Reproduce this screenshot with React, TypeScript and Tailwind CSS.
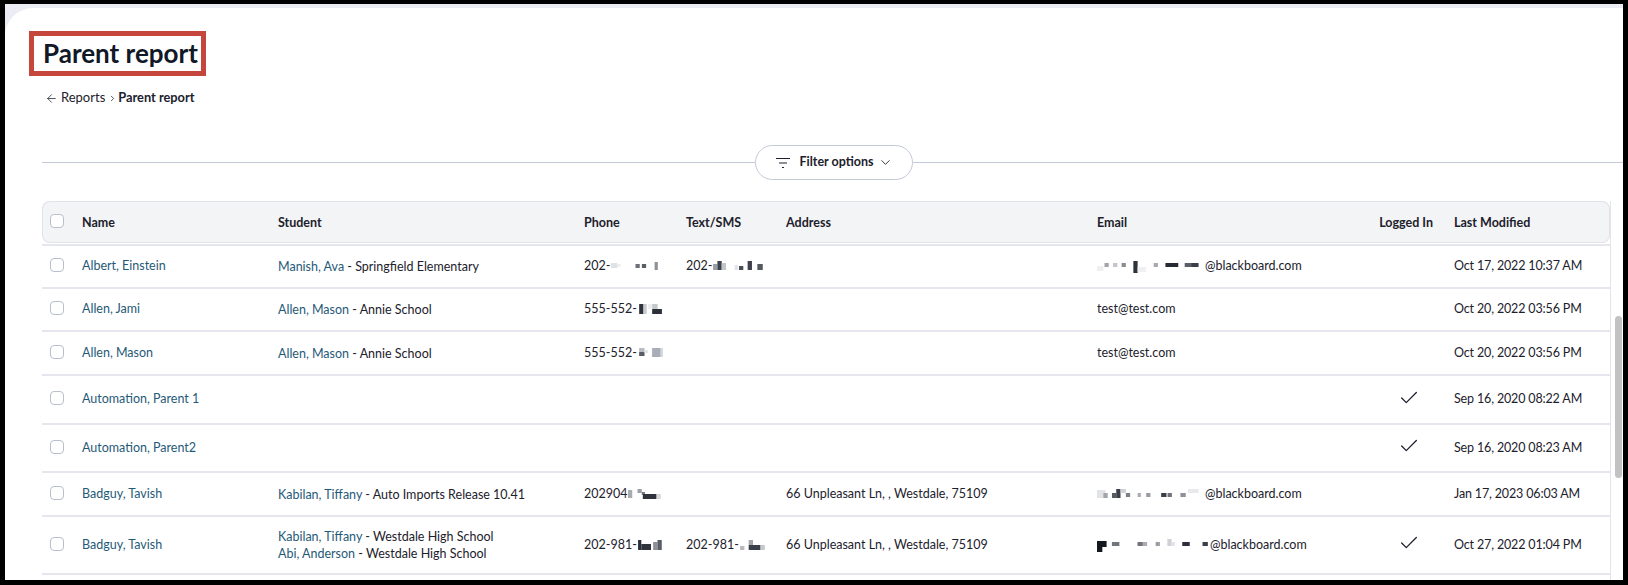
import { ArrowLeft, Check, ChevronDown, ChevronRight } from "lucide-react";

type Cell = [number, number, number, number, string];

interface Blur {
  text: string;
  width: number;
  cells: Cell[];
}

interface RowData {
  height: string;
  name: string;
  students?: { name: string; school: string }[];
  phone?: Blur;
  sms?: Blur;
  address?: string;
  email?: Blur;
  plainEmail?: string;
  logged?: boolean;
  modified: string;
}

const GRID =
  "grid grid-cols-[40px_196px_306px_102px_100px_311px_281px_76px_1fr] items-center";

const rows: RowData[] = [
  {
    height: "h-[43px]",
    name: "Albert, Einstein",
    students: [{ name: "Manish, Ava", school: "Springfield Elementary" }],
    phone: {
      text: "202-",
      width: 48,
      cells: [
        [1, 3, 6, 5, "#dfe1e5"],
        [7, 4, 3, 3, "#eceef0"],
        [24, 4, 4, 4, "#6d7178"],
        [30, 4, 4, 4, "#5a5e66"],
        [42, 2, 3, 8, "#8e9197"],
      ],
    },
    sms: {
      text: "202-",
      width: 50,
      cells: [
        [1, 4, 4, 6, "#9a9da3"],
        [5, 1, 4, 9, "#3d424c"],
        [9, 3, 4, 7, "#c3c5c9"],
        [21, 5, 3, 5, "#e2e3e6"],
        [25, 6, 4, 4, "#4a4e57"],
        [33, 1, 4, 9, "#3d424c"],
        [42, 4, 5, 6, "#55595f"],
      ],
    },
    email: {
      text: "@blackboard.com",
      width: 101,
      cells: [
        [0, 6, 6, 5, "#eeeff1"],
        [7, 3, 4, 4, "#a3a5aa"],
        [15, 3, 4, 4, "#c4c5c9"],
        [23, 3, 4, 4, "#8a8d92"],
        [34, 1, 4, 12, "#2f333c"],
        [38, 7, 8, 5, "#f0f0f2"],
        [53, 3, 4, 4, "#a9abb0"],
        [64, 3, 12, 4, "#252a34"],
        [82, 3, 6, 4, "#5a5e66"],
        [88, 3, 7, 4, "#3a3f49"],
      ],
    },
    modified: "Oct 17, 2022 10:37 AM",
  },
  {
    height: "h-[43px]",
    name: "Allen, Jami",
    students: [{ name: "Allen, Mason", school: "Annie School" }],
    phone: {
      text: "555-552-",
      width: 24,
      cells: [
        [2, 1, 4, 10, "#2f333c"],
        [6, 1, 3, 10, "#c9cbd0"],
        [10, 1, 4, 5, "#eeeff1"],
        [14, 1, 5, 5, "#c6c8cc"],
        [14, 6, 9, 5, "#2b303a"],
      ],
    },
    plainEmail: "test@test.com",
    modified: "Oct 20, 2022 03:56 PM",
  },
  {
    height: "h-[44px]",
    name: "Allen, Mason",
    students: [{ name: "Allen, Mason", school: "Annie School" }],
    phone: {
      text: "555-552-",
      width: 26,
      cells: [
        [2, 1, 5, 4, "#b9bbc0"],
        [2, 5, 5, 4, "#585c64"],
        [7, 3, 3, 3, "#e2e3e6"],
        [14, 1, 8, 9, "#a9adb8"],
        [22, 1, 2, 9, "#d4d5da"],
      ],
    },
    plainEmail: "test@test.com",
    modified: "Oct 20, 2022 03:56 PM",
  },
  {
    height: "h-[49px]",
    name: "Automation, Parent 1",
    logged: true,
    modified: "Sep 16, 2020 08:22 AM",
  },
  {
    height: "h-[48px]",
    name: "Automation, Parent2",
    logged: true,
    modified: "Sep 16, 2020 08:23 AM",
  },
  {
    height: "h-[44px]",
    name: "Badguy, Tavish",
    students: [{ name: "Kabilan, Tiffany", school: "Auto Imports Release 10.41" }],
    phone: {
      text: "202904",
      width: 34,
      cells: [
        [0, 2, 4, 8, "#a9abb0"],
        [9, 1, 4, 4, "#9b9ea3"],
        [13, 4, 3, 3, "#75787f"],
        [14, 6, 13, 5, "#2f333c"],
        [27, 6, 4, 5, "#d6d7da"],
      ],
    },
    address: "66 Unpleasant Ln, , Westdale, 75109",
    email: {
      text: "@blackboard.com",
      width: 101,
      cells: [
        [0, 2, 8, 8, "#e2e3e6"],
        [6, 5, 4, 5, "#a3a5aa"],
        [14, 5, 4, 5, "#565a62"],
        [18, 1, 4, 9, "#3a3f49"],
        [22, 1, 5, 4, "#d0d1d5"],
        [27, 5, 4, 4, "#7c7f85"],
        [38, 5, 3, 4, "#a9abb0"],
        [46, 5, 4, 4, "#999ca1"],
        [60, 5, 5, 4, "#3a3f49"],
        [66, 5, 4, 4, "#6d7178"],
        [78, 5, 5, 4, "#8f9196"],
        [85, 1, 10, 4, "#e8e9eb"],
      ],
    },
    modified: "Jan 17, 2023 06:03 AM",
  },
  {
    height: "h-[58px]",
    name: "Badguy, Tavish",
    students: [
      { name: "Kabilan, Tiffany", school: "Westdale High School" },
      { name: "Abi, Anderson", school: "Westdale High School" },
    ],
    phone: {
      text: "202-981-",
      width: 26,
      cells: [
        [1, 1, 3, 10, "#2a2f39"],
        [4, 5, 9, 6, "#2f333c"],
        [15, 3, 4, 8, "#8f9196"],
        [19, 1, 4, 10, "#5b5f67"],
      ],
    },
    sms: {
      text: "202-981-",
      width: 26,
      cells: [
        [1, 7, 4, 4, "#b8bac0"],
        [9, 1, 4, 5, "#a3a5aa"],
        [9, 6, 11, 5, "#3a3f49"],
        [20, 6, 4, 5, "#c6c8cc"],
      ],
    },
    address: "66 Unpleasant Ln, , Westdale, 75109",
    email: {
      text: "@blackboard.com",
      width: 106,
      cells: [
        [0, 2, 9, 6, "#14181f"],
        [0, 8, 5, 5, "#14181f"],
        [14, 3, 7, 4, "#70747b"],
        [38, 3, 5, 4, "#70747b"],
        [43, 3, 4, 4, "#a9abb0"],
        [55, 3, 4, 4, "#9a9da3"],
        [66, 0, 4, 7, "#d0d1d5"],
        [70, 3, 3, 4, "#e2e3e6"],
        [80, 3, 7, 4, "#2a2f39"],
        [99, 3, 5, 4, "#3a3f49"],
      ],
    },
    logged: true,
    modified: "Oct 27, 2022 01:04 PM",
  },
];

function Mosaic({ blur }: { blur: Blur }) {
  return (
    <svg
      width={Math.round(blur.width * 1.07)}
      height={13}
      viewBox={`0 0 ${blur.width} 13`}
      preserveAspectRatio="none"
      className="shrink-0 block"
    >
      {blur.cells.map(([x, y, w, h, c], i) => (
        <rect key={i} x={x} y={y} width={w} height={h} fill={c} />
      ))}
    </svg>
  );
}

function Checkbox({ offset }: { offset: string }) {
  return (
    <span
      className={`block w-[14px] h-[14px] ml-2 rounded-[4px] border border-[#b9c0cd] bg-white ${offset}`}
    />
  );
}

function Row({ row }: { row: RowData }) {
  return (
    <div className={`${GRID} ${row.height} border-b-2 border-[#e6e6ee] text-[#1c212c]`}>
      <Checkbox offset="-mt-[3px]" />
      <span className="text-[#1f5a78]">{row.name}</span>
      <div className="leading-[17px]">
        {row.students?.map((s) => (
          <div key={s.name}>
            <span className="text-[#1f5a78]">{s.name}</span> - {s.school}
          </div>
        ))}
      </div>
      <div className="flex items-center">
        {row.phone && (
          <>
            <span>{row.phone.text}</span>
            <Mosaic blur={row.phone} />
          </>
        )}
      </div>
      <div className="flex items-center">
        {row.sms && (
          <>
            <span>{row.sms.text}</span>
            <Mosaic blur={row.sms} />
          </>
        )}
      </div>
      <span>{row.address}</span>
      <div className="flex items-center">
        {row.email && (
          <>
            <Mosaic blur={row.email} />
            <span>{row.email.text}</span>
          </>
        )}
        {row.plainEmail && <span>{row.plainEmail}</span>}
      </div>
      <div className="flex justify-end pr-[34px] -mt-[4px]">
        {row.logged && <Check size={22} strokeWidth={1.4} className="text-[#1c212c]" />}
      </div>
      <span className="tracking-[-0.15px]">{row.modified}</span>
    </div>
  );
}

export default function App() {
  return (
    <div className="w-[1628px] h-[585px] bg-black pt-1 px-[5px] pb-[5px] overflow-hidden font-['Lato',sans-serif] text-[12.5px]">
      <div className="h-full bg-[#ecedf4] pt-1">
        <div className="h-full bg-white rounded-tl-[28px] overflow-hidden pt-[23px]">
          <div className="pl-6">
            <div className="w-[177px] h-[45px] border-[5px] border-[#c4463d] flex items-center pl-[9px] pb-[2px]">
              <h1 className="text-[26px] font-bold text-[#111827] whitespace-nowrap leading-none">
                Parent report
              </h1>
            </div>
            <nav className="flex items-center h-5 mt-3 pl-4 text-[13px] text-[#1c212c]">
              <ArrowLeft size={13} strokeWidth={1.4} />
              <span className="ml-[3px]">Reports</span>
              <ChevronRight size={9} strokeWidth={2} className="ml-[3px]" />
              <span className="ml-[1px] text-[12.8px] font-bold">Parent report</span>
            </nav>
          </div>

          {/* Filter divider */}
          <div className="flex items-center mt-[37px] pl-[37px]">
            <div className="w-[713px] h-px bg-[#c3c9d6]" />
            <button className="flex items-center justify-center w-[158px] h-[35px] rounded-full border border-[#c3c9d6] font-bold text-[#1c212c]">
              <svg width="16" height="12" viewBox="0 0 16 12" fill="none" stroke="#1c212c" strokeWidth="1.2">
                <path d="M1 1.5h14M4 6h8M7 10.5h2" />
              </svg>
              <span className="ml-2">Filter options</span>
              <ChevronDown size={15} strokeWidth={1.4} className="ml-1" />
            </button>
            <div className="flex-1 h-px bg-[#c3c9d6]" />
          </div>

          {/* Table */}
          <div className="flex mt-[21px] pl-[37px] h-[400px]">
            <div className="w-[1568px] shrink-0">
              <div className={`${GRID} h-[42px] pt-[3px] bg-[#f3f4f6] ring-1 ring-inset ring-[#e1e3e9] rounded-lg font-bold text-[#1c212c]`}>
                <Checkbox offset="-mt-[5px]" />
                <span>Name</span>
                <span>Student</span>
                <span>Phone</span>
                <span>Text/SMS</span>
                <span>Address</span>
                <span>Email</span>
                <span className="justify-self-end pr-[21px] whitespace-nowrap">Logged In</span>
                <span>Last Modified</span>
              </div>
              <div className="border-t-2 border-[#e6e6ee] mt-px">
                {rows.map((row) => (
                  <Row key={row.name + row.modified} row={row} />
                ))}
              </div>
            </div>
            <div className="w-[13px] shrink-0 border-l border-[#e3e3e8] pl-1">
              <div className="w-[7px] h-[162px] mt-[115px] rounded-full bg-[#c2c2c2]" />
            </div>
          </div>
        </div>
      </div>
    </div>
  );
}
